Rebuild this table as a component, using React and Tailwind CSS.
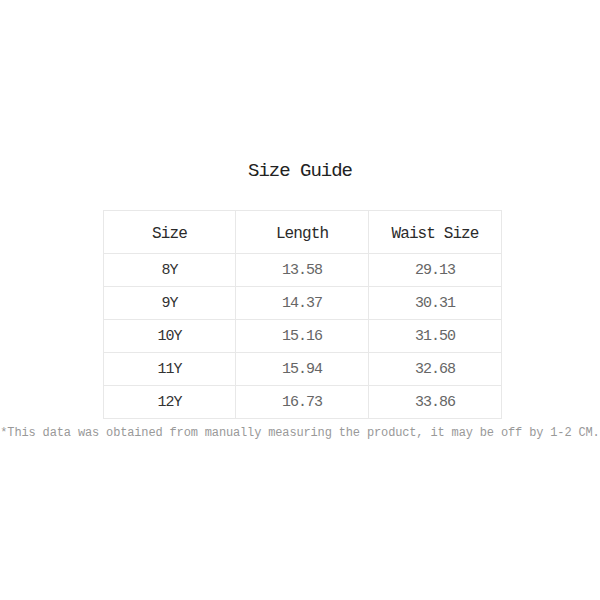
import React from 'react';

const rows = [
    ['8Y', '13.58', '29.13'],
    ['9Y', '14.37', '30.31'],
    ['10Y', '15.16', '31.50'],
    ['11Y', '15.94', '32.68'],
    ['12Y', '16.73', '33.86'],
];

const font = { fontFamily: '"Liberation Mono", "DejaVu Sans Mono", monospace' };

function Cell({ children, header, first }) {
    return (
        <div
            className={`flex items-center justify-center pt-[3px] border-r border-b border-[#e8e8e8] ${header ? 'h-[43px] text-[16px] tracking-[-0.9px] text-[#2a2a2a]' : 'h-[33px] text-[15px] tracking-[-1px]'} ${!header && first ? 'text-[#333]' : ''} ${!header && !first ? 'text-[#666]' : ''}`}
        >
            {children}
        </div>
    );
}

export default function App() {
    return (
        <div className="w-[600px] h-[600px] bg-white flex flex-col items-center pt-[159px]" style={font}>
            {/* Title */}
            <h1 className="text-[19px] leading-[24px] tracking-[-1px] text-[#222]">Size Guide</h1>

            {/* Size table */}
            <div className="mt-[27px] ml-[5px] grid grid-cols-[132px_133px_133px] border-l border-t border-[#e8e8e8]">
                <Cell header>Size</Cell>
                <Cell header>Length</Cell>
                <Cell header>Waist Size</Cell>
                {rows.map((r) =>
                    r.map((v, i) => (
                        <Cell key={r[0] + i} first={i === 0}>{v}</Cell>
                    ))
                )}
            </div>

            <p className="mt-[6px] w-[600px] text-center whitespace-nowrap text-[12px] leading-[16px] tracking-[-0.15px] text-[#999]">
                *This data was obtained from manually measuring the product, it may be off by 1-2 CM.
            </p>
        </div>
    );
}
